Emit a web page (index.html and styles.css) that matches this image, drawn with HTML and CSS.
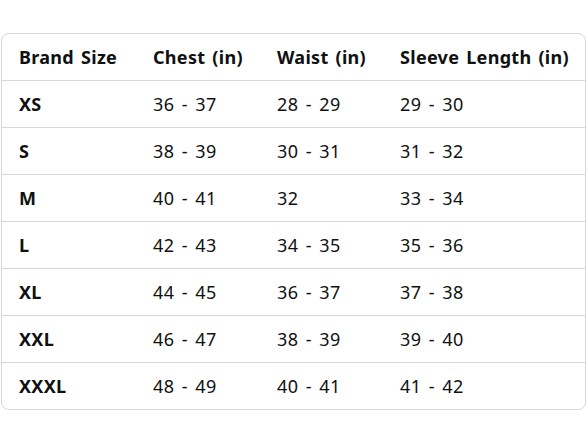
FILE: index.html
```html
<!DOCTYPE html>
<html>
<head>
<meta charset="utf-8">
<link rel="stylesheet" href="styles.css">
</head>
<body>
<div class="page">
  <div class="frame">
    <table class="size-table">
      <colgroup>
        <col class="c1"><col class="c2"><col class="c3"><col class="c4">
      </colgroup>
      <thead>
        <tr><th>Brand Size</th><th>Chest (in)</th><th>Waist (in)</th><th>Sleeve Length (in)</th></tr>
      </thead>
      <tbody>
        <tr><th>XS</th><td>36 - 37</td><td>28 - 29</td><td>29 - 30</td></tr>
        <tr><th>S</th><td>38 - 39</td><td>30 - 31</td><td>31 - 32</td></tr>
        <tr><th>M</th><td>40 - 41</td><td>32</td><td>33 - 34</td></tr>
        <tr><th>L</th><td>42 - 43</td><td>34 - 35</td><td>35 - 36</td></tr>
        <tr><th>XL</th><td>44 - 45</td><td>36 - 37</td><td>37 - 38</td></tr>
        <tr><th>XXL</th><td>46 - 47</td><td>38 - 39</td><td>39 - 40</td></tr>
        <tr class="last"><th>XXXL</th><td>48 - 49</td><td>40 - 41</td><td>41 - 42</td></tr>
      </tbody>
    </table>
  </div>
</div>
</body>
</html>
```
FILE: styles.css
```css
html, body {
  margin: 0;
  padding: 0;
  background: #ffffff;
}
.page {
  padding: 33px 2px 0 1px;
  font-family: "Noto Sans", "Liberation Sans", sans-serif;
  color: #0f1111;
}
.frame {
  border: 1px solid #d5d9d9;
  border-radius: 8px;
  overflow: hidden;
}
.size-table {
  width: 100%;
  border-collapse: collapse;
  table-layout: fixed;
}
.c1 { width: 134px; }
.c2 { width: 124px; }
.c3 { width: 123px; }
.size-table th,
.size-table td {
  height: 46px;
  padding: 0 0 0 17px;
  text-align: left;
  font-size: 18px;
  line-height: 22px;
  border-bottom: 1px solid #d5d9d9;
  white-space: nowrap;
  vertical-align: middle;
}
.size-table th {
  font-weight: 700;
  letter-spacing: 0.3px;
  word-spacing: 2px;
}
.size-table td {
  font-weight: 400;
  letter-spacing: 0.5px;
  word-spacing: 2px;
}
.size-table tr.last th,
.size-table tr.last td {
  border-bottom: none;
}
```
